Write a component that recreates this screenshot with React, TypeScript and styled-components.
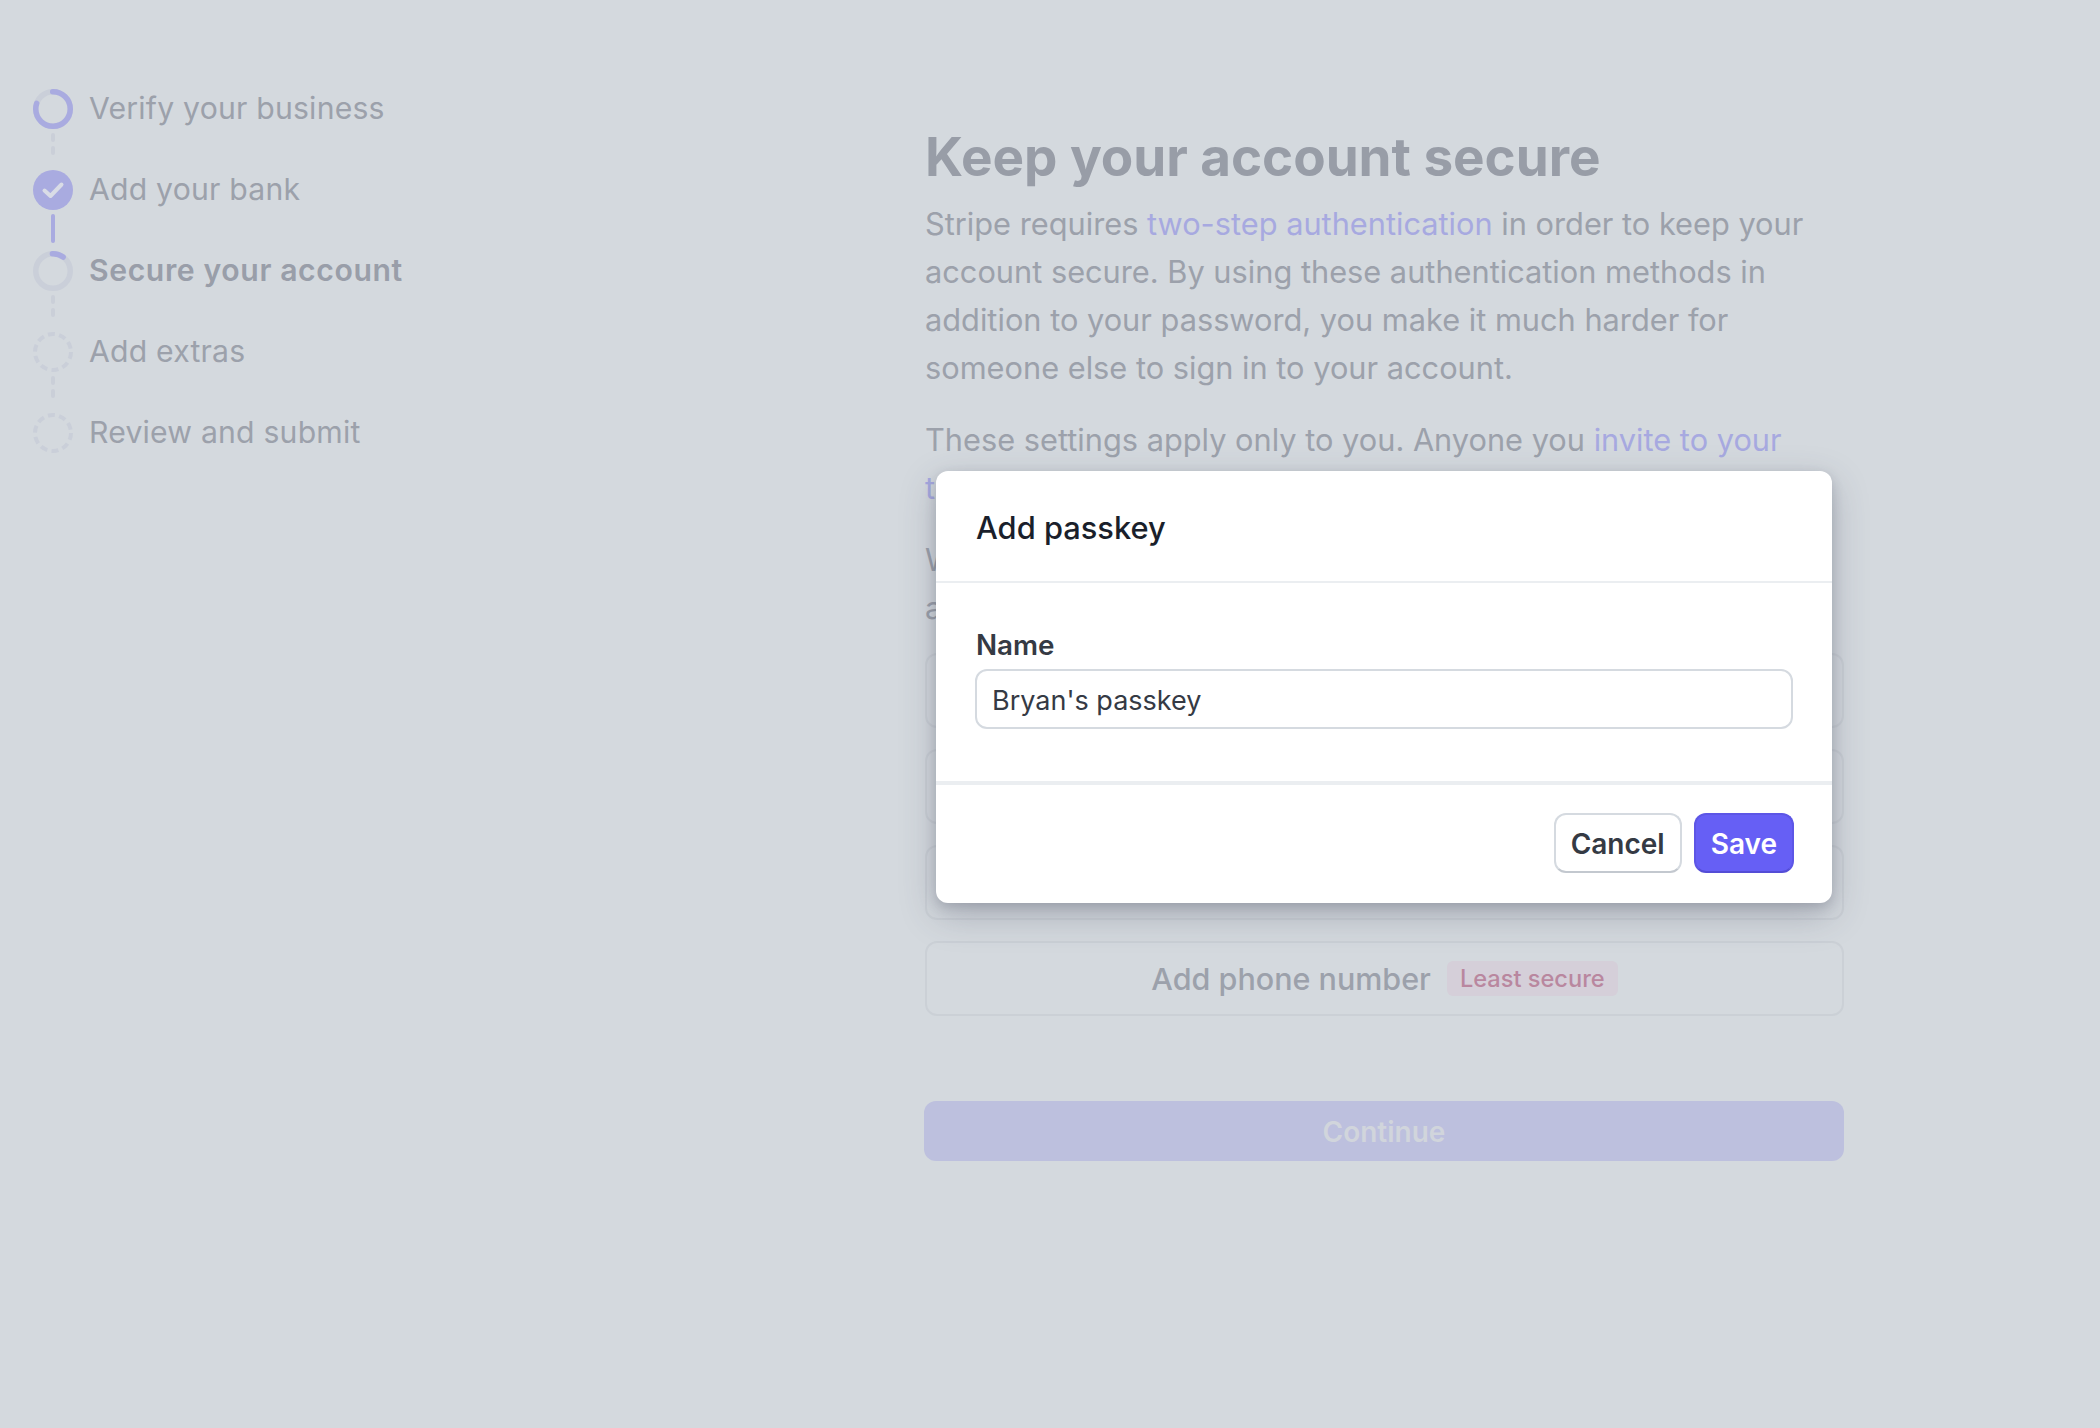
import styled, { createGlobalStyle } from "styled-components";

const GlobalStyle = createGlobalStyle`
  * {
    box-sizing: border-box;
  }
  html,
  body {
    margin: 0;
    background-color: #d4d9de;
    font-family: Inter, "Liberation Sans", sans-serif;
  }
`;

const Page = styled.div`
  position: relative;
  width: 2100px;
  height: 1428px;
  overflow: hidden;
  display: flex;
`;

const Sidebar = styled.nav`
  width: 925px;
  flex-shrink: 0;
  padding: 89px 0 0 33px;
  display: flex;
  flex-direction: column;
`;

const StepRow = styled.div`
  display: flex;
  align-items: center;
  gap: 16px;
  height: 40px;
`;

const StepLabel = styled.span<{ $active?: boolean }>`
  padding-bottom: 2px;
  font-size: 30.2px;
  font-weight: ${(p) => (p.$active ? 600 : 400)};
  letter-spacing: ${(p) => (p.$active ? "0.6px" : "0.2px")};
  color: ${(p) => (p.$active ? "#999ea9" : "#9ca1ab")};
  white-space: nowrap;
`;

const Connector = styled.div<{ $solid?: boolean }>`
  width: 4px;
  height: 41px;
  margin-left: 18px;
  padding-top: 4px;
  display: flex;
  flex-direction: column;
  gap: 4px;
  span {
    display: block;
    border-radius: 2px;
    height: ${(p) => (p.$solid ? "29px" : "9px")};
    background-color: ${(p) => (p.$solid ? "#a9abe0" : "#cacfd8")};
  }
`;

const Main = styled.main`
  width: 919px;
  padding-top: 124px;
`;

const Title = styled.h1`
  margin: 0 0 10px;
  font-size: 53px;
  line-height: 66px;
  font-weight: 700;
  letter-spacing: -0.05px;
  color: #989da7;
  white-space: nowrap;
`;

const Paragraph = styled.p`
  margin: 0 0 24px;
  font-size: 30.75px;
  line-height: 48px;
  color: #9ca1ab;
  &:last-of-type {
    margin-bottom: 21px;
  }
`;

const TextLink = styled.a`
  color: #a7a9e0;
`;

const Options = styled.div`
  display: flex;
  flex-direction: column;
  gap: 21px;
`;

const OptionCard = styled.div`
  height: 75px;
  display: flex;
  align-items: center;
  justify-content: center;
  gap: 16px;
  border: 2px solid #cbd0d6;
  border-radius: 12px;
  font-size: 30.5px;
  font-weight: 500;
  color: #9ca1ab;
`;

const Badge = styled.span`
  padding: 3px 13px;
  border-radius: 6px;
  background-color: #d5cfd9;
  color: #b9879f;
  font-size: 23.6px;
  font-weight: 500;
`;

const ContinueButton = styled.button`
  display: block;
  width: 920px;
  height: 60px;
  margin: 85px 0 0 -1px;
  padding-top: 2px;
  border: none;
  border-radius: 12px;
  background-color: #bdc0de;
  color: #d1d5dc;
  font-family: inherit;
  font-size: 28px;
  font-weight: 600;
`;

const Modal = styled.section`
  position: absolute;
  left: 936px;
  top: 471px;
  width: 896px;
  height: 432px;
  border-radius: 12px;
  background-color: #fff;
  box-shadow: 0 12px 36px rgba(60, 66, 87, 0.28), 0 4px 12px rgba(60, 66, 87, 0.2);
  display: flex;
  flex-direction: column;
`;

const ModalHeader = styled.header`
  height: 112px;
  padding: 2px 40px 0;
  display: flex;
  align-items: center;
  border-bottom: 2px solid #ebeef1;
  font-size: 30.8px;
  font-weight: 500;
  color: #1a1f2b;
`;

const ModalBody = styled.div`
  height: 202px;
  padding: 44px 39px 0;
  border-bottom: 4px solid #ebeef1;
`;

const FieldLabel = styled.label`
  display: block;
  margin-bottom: 6px;
  padding-left: 1px;
  font-size: 27.8px;
  line-height: 36px;
  font-weight: 600;
  color: #353a44;
`;

const NameInput = styled.input`
  display: block;
  width: 100%;
  height: 60px;
  padding: 2px 15px 0;
  border: 2px solid #d5dae0;
  border-radius: 12px;
  outline: none;
  font-family: inherit;
  font-size: 27px;
  color: #353a44;
`;

const ModalFooter = styled.footer`
  flex: 1;
  padding: 0 38px 2px 0;
  display: flex;
  align-items: center;
  justify-content: flex-end;
  gap: 12px;
`;

const ModalButton = styled.button<{ $primary?: boolean }>`
  height: 60px;
  padding: 2px 15px 0;
  border: 2px solid ${(p) => (p.$primary ? "#5d56e6" : "#d5dae0")};
  border-bottom-color: ${(p) => (p.$primary ? "#544dd6" : "#c3c8cf")};
  border-radius: 12px;
  background-color: ${(p) => (p.$primary ? "#665ff5" : "#fff")};
  color: ${(p) => (p.$primary ? "#fff" : "#353a44")};
  font-family: inherit;
  font-size: 28px;
  font-weight: 600;
`;

const Ring = ({ progress, arcStart }: { progress: number; arcStart: number }) => {
  const length = 2 * Math.PI * 17.25;
  return (
    <svg width="40" height="40" viewBox="0 0 40 40" fill="none">
      <circle cx="20" cy="20" r="17.25" stroke="#cacfd9" strokeWidth="5.5" />
      <circle
        cx="20"
        cy="20"
        r="17.25"
        stroke="#a9abe0"
        strokeWidth="5.5"
        strokeLinecap="round"
        strokeDasharray={`${length * progress} ${length}`}
        transform={`rotate(${arcStart} 20 20)`}
      />
    </svg>
  );
};

const CheckDone = () => (
  <svg width="40" height="40" viewBox="0 0 40 40" fill="none">
    <circle cx="20" cy="20" r="20" fill="#a9abe0" />
    <path
      d="M11.5 20.5 L17.5 26 L28.5 14.5"
      stroke="#d9dce6"
      strokeWidth="4"
      strokeLinecap="round"
      strokeLinejoin="round"
    />
  </svg>
);

const DashedRing = () => (
  <svg width="40" height="40" viewBox="0 0 40 40" fill="none">
    <circle
      cx="20"
      cy="20"
      r="18"
      stroke="#cacfd9"
      strokeWidth="4"
      strokeLinecap="butt"
      strokeDasharray="7 4.31"
    />
  </svg>
);

const DashedLine = () => (
  <Connector>
    <span />
    <span />
  </Connector>
);

const App = () => {
  return (
    <Page>
      <GlobalStyle />
      <Sidebar>
        <StepRow>
          <Ring progress={0.8} arcStart={-91} />
          <StepLabel>Verify your business</StepLabel>
        </StepRow>
        <DashedLine />
        <StepRow>
          <CheckDone />
          <StepLabel>Add your bank</StepLabel>
        </StepRow>
        <Connector $solid>
          <span />
        </Connector>
        <StepRow>
          <Ring progress={0.105} arcStart={-92} />
          <StepLabel $active>Secure your account</StepLabel>
        </StepRow>
        <DashedLine />
        <StepRow>
          <DashedRing />
          <StepLabel>Add extras</StepLabel>
        </StepRow>
        <DashedLine />
        <StepRow>
          <DashedRing />
          <StepLabel>Review and submit</StepLabel>
        </StepRow>
      </Sidebar>

      <Main>
        <Title>Keep your account secure</Title>
        <Paragraph>
          Stripe requires <TextLink>two-step authentication</TextLink> in order to keep your account
          secure. By using these authentication methods in addition to your password, you make it
          much harder for someone else to sign in to your account.
        </Paragraph>
        <Paragraph>
          These settings apply only to you. Anyone you <TextLink>invite to your team</TextLink> will
          set up their own.
        </Paragraph>
        <Paragraph>
          We recommend adding more than one method, so you can always sign in to your account.
        </Paragraph>
        <Options>
          <OptionCard>Add passkey</OptionCard>
          <OptionCard>Add authenticator app</OptionCard>
          <OptionCard>Add security key</OptionCard>
          <OptionCard>
            Add phone number <Badge>Least secure</Badge>
          </OptionCard>
        </Options>
        <ContinueButton>Continue</ContinueButton>
      </Main>

      <Modal>
        <ModalHeader>Add passkey</ModalHeader>
        <ModalBody>
          <FieldLabel>Name</FieldLabel>
          <NameInput defaultValue="Bryan's passkey" />
        </ModalBody>
        <ModalFooter>
          <ModalButton>Cancel</ModalButton>
          <ModalButton $primary>Save</ModalButton>
        </ModalFooter>
      </Modal>
    </Page>
  );
};

export default App;
